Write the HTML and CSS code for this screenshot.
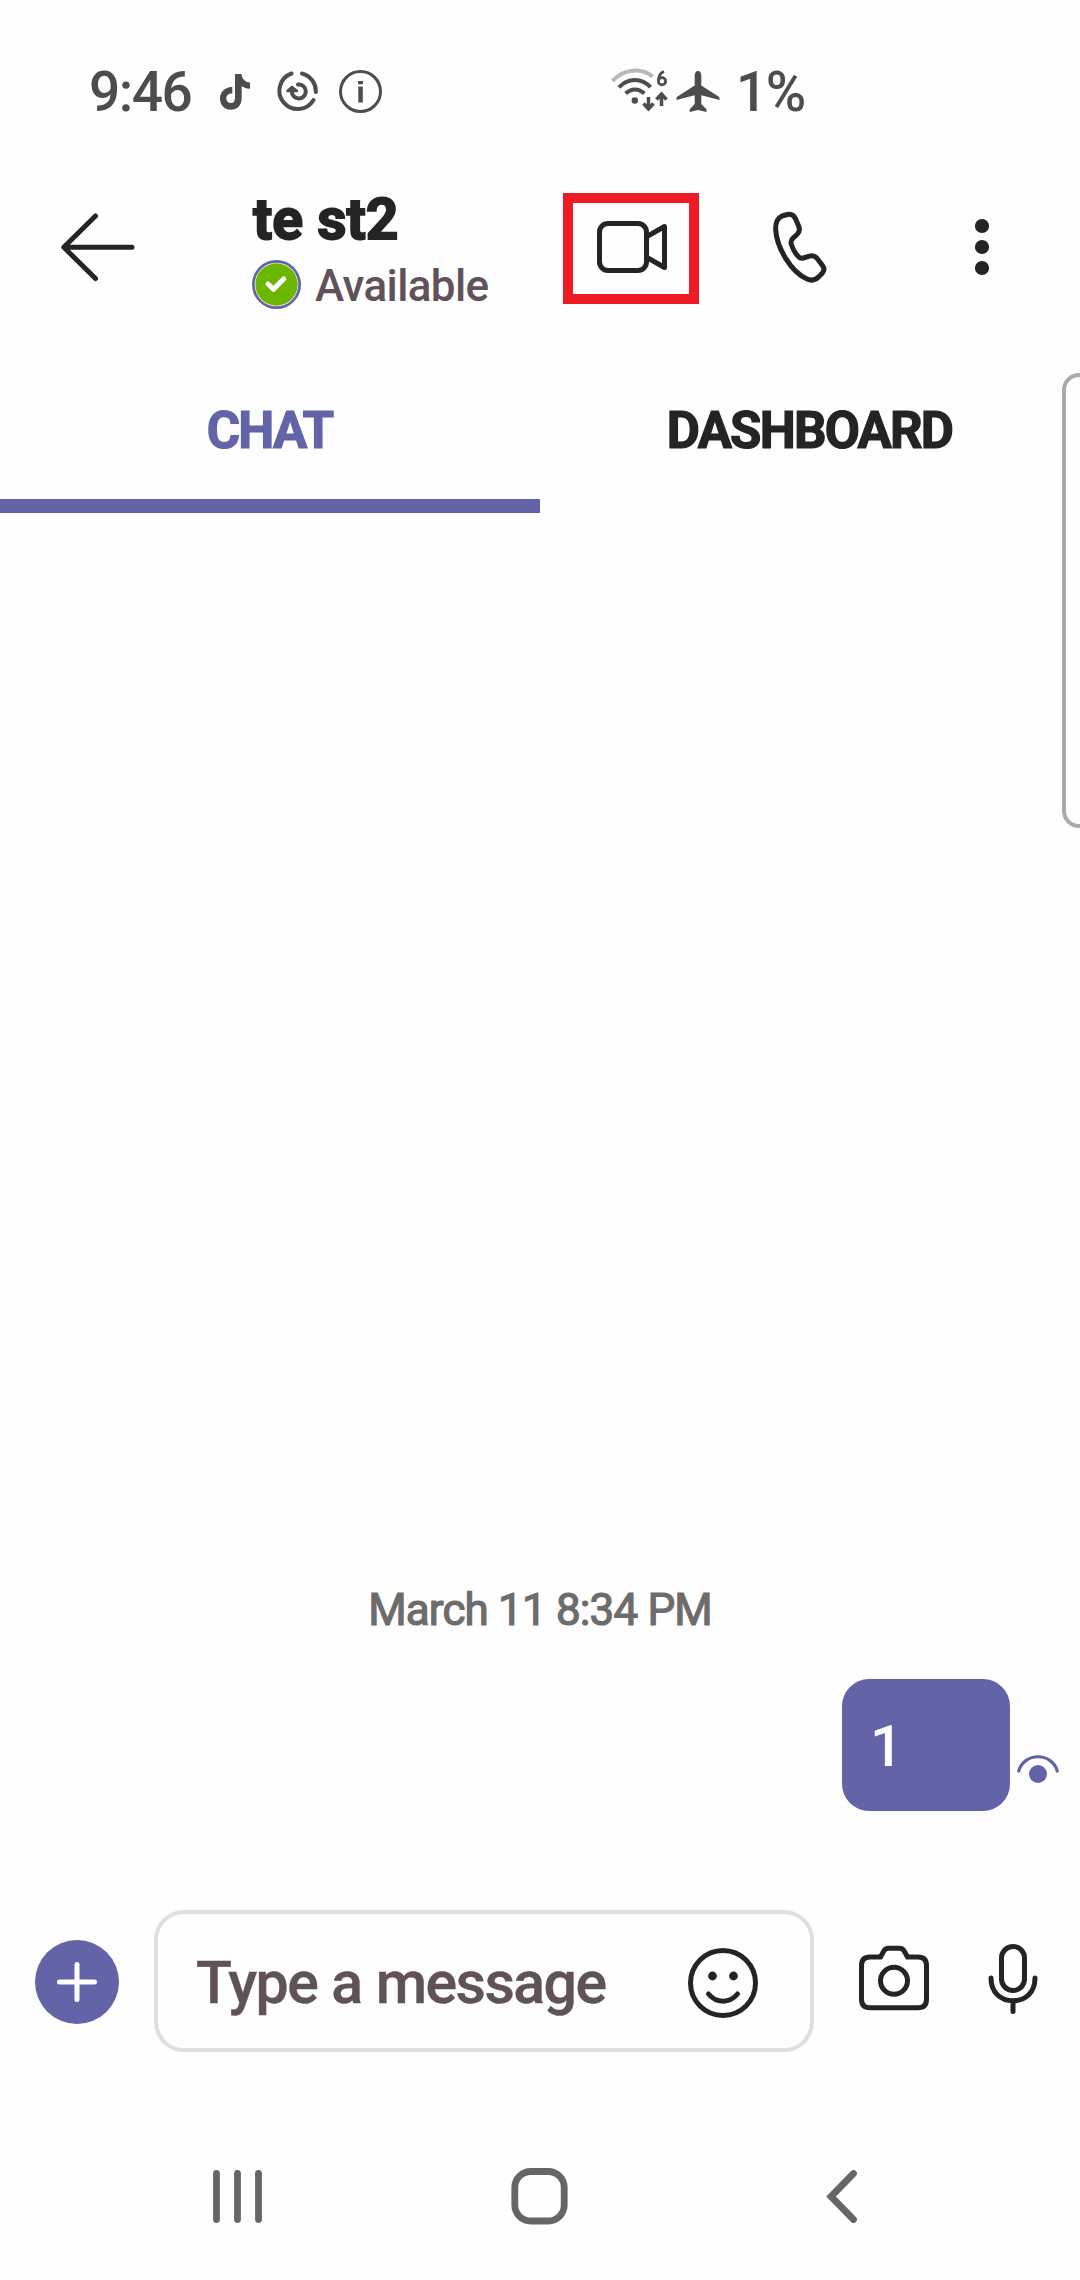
FILE: index.html
```html
<!DOCTYPE html>
<html lang="en">
<head>
<meta charset="utf-8">
<title>te st2 - Chat</title>
<link rel="stylesheet" href="styles.css">
</head>
<body>
<div class="phone">
  <div class="status">
    <span class="time">9:46</span>
    <svg class="tiktok" viewBox="220 74 30 36" width="30" height="36"><path fill="#4d4d4d" d="M235 74h6.5c.3 4.8 3.6 8 8.5 8.600v6c-3 .2-6-.8-8.300-2.600V98c0 7.500-4.700 11.800-10.900 11.800S220 105 220 98.500c0-6.700 5.500-11.800 12.300-11.400v6.500c-3.300-.6-6 1.700-6 4.800 0 2.900 2.100 4.700 4.600 4.700 2.700 0 4.100-1.900 4.100-5z"/></svg>
    <svg class="activity" viewBox="276 70 43 43" width="43" height="43" fill="none" stroke="#4d4d4d" stroke-width="4" stroke-linecap="round"><path d="M291.500 73.500A18.300 18.300 0 1 0 313.500 100M302 73.500A18.300 18.300 0 0 1 315.800 92"/><path d="M298 84.500A7 7 0 1 1 291.800 91.500"/><path d="M287.500 91l4.500-4 5 4z" fill="#4d4d4d" stroke-width="2.500" stroke-linejoin="round"/></svg>
    <svg class="info" viewBox="339 70 43 43" width="43" height="43"><circle cx="360.500" cy="91.500" r="20" fill="none" stroke="#4d4d4d" stroke-width="3"/><path fill="#4d4d4d" d="M358.300 86.500h4.500v16h-4.500zM358 81h5v3.300h-5z"/></svg>
    <svg class="wifi" viewBox="610 68 60 44" width="60" height="44" fill="none" stroke="#4d4d4d" stroke-width="4"><path stroke="#b8b8b8" d="M612.500 81C623 69 641 67 652.700 76.500"/><path d="M619 87.300C628 77.500 642 77.500 650.500 87.300M625.700 93.500C631 88 639 88 644.300 93.500"/><circle cx="634.800" cy="100.500" r="3.200" fill="#4d4d4d" stroke="none"/><path stroke-width="3.500" d="M648.500 97v13M643.500 103.500l5 5.500 5-5.500M661.500 106V93.500M656.500 99.500l5-5.500 5 5.500"/><circle cx="662" cy="81.200" r="3.600" stroke-width="2.800"/><path stroke-width="2.800" d="M664 71.500c-4 1.500-5.600 4.500-5.600 9.500"/></svg>
    <svg class="plane" viewBox="676 70 44 42" width="44" height="42"><path fill="#4d4d4d" d="M698 70c-2 0-3.300 2-3.300 4.500V84.500L677.500 95.500Q676.300 96.300 676.300 99l18.400-4.800v8.800L690 108q-.5.700-.3 3l8.300-2 8.500 2q.3-2.300-.3-3L701.300 103V94.200l18.400 4.800q0-2.700-1.200-3.500L701.300 84.500V74.500C701.300 72 700 70 698 70z"/></svg>
    <span class="battery">1%</span>
  </div>

  <header class="header">
    <svg class="back" viewBox="60 210 76 74" width="76" height="74" fill="none" stroke="#242424" stroke-width="5" stroke-linecap="round" stroke-linejoin="round"><path d="M95.500 216L63.800 247.300 95.500 278.500M64 247.300H132"/></svg>
    <div class="contact">
      <h1 class="name">te st2</h1>
      <div class="presence">
        <svg viewBox="252 260 49 49" width="49" height="49"><circle cx="276.500" cy="284.500" r="24.500" fill="#6264a7"/><circle cx="276.500" cy="284.500" r="21.800" fill="#fefefe"/><circle cx="276.500" cy="284.500" r="21.200" fill="#6bb700"/><path d="M268 284l5.500 5.300 10.200-10.300" fill="none" stroke="#fff" stroke-width="5" stroke-linecap="round" stroke-linejoin="round"/></svg>
        <span class="available">Available</span>
      </div>
    </div>
    <div class="video"><svg viewBox="596 219 72 56" width="72" height="56" fill="none" stroke="#242424" stroke-width="5" stroke-linejoin="round"><rect x="599.500" y="223.500" width="47" height="47" rx="8.500"/><path d="M647 236.500l17.500-10v41L647 257.500"/></svg></div>
    <svg class="phone-icon" viewBox="771 210 58 74" width="58" height="74" fill="none" stroke="#242424" stroke-width="5" stroke-linejoin="round"><path d="M782 216l5.500-1.500c4-.8 6.500.8 8 4.300l3.300 7.700c1.300 3.300.7 5.500-1.800 8l-4.500 4.200c-1.700 1.700-1.800 3-1.300 5.200 1.500 5 4 9.500 7.200 12.700 1.500 1.700 3 2 5 1.400l6-1.900c3.300-1 5.800-.2 7.800 2.400l5.300 7c2 2.700 1.800 5.500-.5 8l-3 3.100c-3.200 3.400-7.700 4.300-12 2.400-16-7-30-31-31.300-49-.4-7 2-12 6.300-14z"/></svg>
    <svg class="more" viewBox="974 217 16 60" width="16" height="60" fill="#242424"><circle cx="982" cy="226" r="7.100"/><circle cx="982" cy="247" r="7.100"/><circle cx="982" cy="268" r="7.100"/></svg>
  </header>

  <nav class="tabs">
    <div class="tab active"><span>CHAT</span></div>
    <div class="tab"><span>DASHBOARD</span></div>
    <div class="edge-handle"></div>
  </nav>

  <main class="messages">
    <div class="date">March 11 8:34 PM</div>
    <div class="sent">
      <div class="bubble">1</div>
      <svg class="seen" viewBox="1016 1753 44 32" width="44" height="32"><path d="M1018.700 1771C1024 1752 1052 1752 1057.300 1771" fill="none" stroke="#6264a7" stroke-width="3.200" stroke-linecap="round"/><circle cx="1038" cy="1774" r="9" fill="#6264a7"/></svg>
    </div>
  </main>

  <div class="compose">
    <svg class="plus" viewBox="35 1940 84 84" width="84" height="84"><circle cx="77" cy="1982" r="42" fill="#6264a7"/><path d="M77 1964.500v35M59.500 1982h35" stroke="#fff" stroke-width="5" stroke-linecap="round"/></svg>
    <div class="input">
      <span class="placeholder">Type a message</span>
      <svg class="smile" viewBox="687 1947 72 72" width="72" height="72" fill="none" stroke="#242424" stroke-width="5"><circle cx="723" cy="1983" r="32.500"/><circle cx="712.500" cy="1976" r="4.400" fill="#242424" stroke="none"/><circle cx="733.500" cy="1976" r="4.400" fill="#242424" stroke="none"/><path stroke-linecap="round" d="M708.500 1994c8 9.500 21 9.500 29 0"/></svg>
    </div>
    <svg class="camera" viewBox="857 1944 74 68" width="74" height="68" fill="none" stroke="#242424" stroke-width="5"><path d="M870 1957h10.500l3.200-5.800q1.700-2.900 4.700-2.900h11.200q3 0 4.700 2.900l3.200 5.800H918q8.500 0 8.500 8.500v33.700q0 8.500-8.500 8.500H870q-8.500 0-8.500-8.500v-33.700q0-8.500 8.500-8.500z"/><circle cx="894" cy="1980.700" r="13.500"/></svg>
    <svg class="mic" viewBox="986 1942 54 74" width="54" height="74" fill="none" stroke="#242424" stroke-width="5" stroke-linecap="round"><rect x="1001.500" y="1946.500" width="23" height="44" rx="11.500"/><path d="M991 1978c0 14.500 9.500 22.800 22 22.800s22-8.300 22-22.800M1013 2001v10.500"/></svg>
  </div>

  <div class="navbar">
    <svg viewBox="211 2166 54 60" width="54" height="60" stroke="#666" stroke-width="6.800" stroke-linecap="round"><path d="M216.500 2173.500v46M237.500 2173.500v46M258.500 2173.500v46"/></svg>
    <svg class="home" viewBox="510 2166 60 60" width="60" height="60"><rect x="514.800" y="2171.500" width="49.400" height="49.500" rx="16" fill="none" stroke="#666" stroke-width="6.800"/></svg>
    <svg class="nav-back" viewBox="824 2166 36 60" width="36" height="60" fill="none" stroke="#666" stroke-width="6.800" stroke-linecap="round"><path d="M853.500 2173.500L831 2196.500l22.500 23"/></svg>
  </div>
</div>
</body>
</html>
```
FILE: styles.css
```css
* { box-sizing: border-box; }
body {
  margin: 0;
  background: #fefefe;
  color: #242424;
  font-family: Roboto, "Liberation Sans", sans-serif;
}
svg { display: block; flex: none; }
span, .name, .date, .bubble { white-space: nowrap; }
.phone {
  width: 1080px;
  height: 2280px;
  display: flex;
  flex-direction: column;
  overflow: hidden;
}

/* Status bar */
.status {
  height: 183px;
  display: flex;
  align-items: center;
  color: #4d4d4d;
  font-size: 55px;
  font-weight: 500;
}
.time { width: 131px; margin-left: 89px; letter-spacing: -1.5px; }
.activity { margin-left: 26px; }
.info { margin-left: 20px; }
.wifi { margin-left: 228px; margin-top: -3px; }
.plane { margin-left: 6px; }
.battery { margin-left: 16px; letter-spacing: -1.5px; }

/* Header */
.header {
  height: 178px;
  padding: 8px 0 0 60px;
  display: flex;
  align-items: flex-start;
}
.back { margin-top: 19px; }
.contact { width: 311px; margin-left: 116px; }
.name {
  height: 57px;
  margin: 0;
  padding-left: 1px;
  font-size: 57px;
  line-height: 57px;
  font-weight: 700;
  -webkit-text-stroke: 1.8px #242424;
}
.presence {
  margin-top: 12px;
  height: 49px;
  display: flex;
  align-items: center;
  gap: 14px;
  color: #61525a;
  font-size: 44px;
  font-weight: 500;
}
.available { letter-spacing: -0.6px; padding-top: 2px; }
.video {
  width: 136px;
  height: 111px;
  margin-top: 2px;
  border: 10px solid #ed1c24;
  padding: 16px 0 0 23px;
}
.phone-icon { margin: 19px 0 0 72px; }
.more { margin: 26px 0 0 145px; }

/* Tabs */
.tabs {
  height: 152px;
  display: grid;
  grid-template-columns: 1fr 1fr;
  position: relative;
}
.tab {
  display: flex;
  align-items: center;
  justify-content: center;
  padding-right: 1px;
  border-bottom: 14px solid transparent;
  font-size: 51px;
  font-weight: 700;
  letter-spacing: -1.8px;
  -webkit-text-stroke: 1.2px currentColor;
}
.tab.active { color: #6264a7; border-color: #6264a7; }
.edge-handle {
  position: absolute;
  top: 12px;
  right: 0;
  width: 18px;
  height: 455px;
  border: 4px solid #aaa;
  border-right: 0;
  border-radius: 17px 0 0 17px;
}

/* Messages */
.messages {
  flex: 1;
  display: flex;
  flex-direction: column;
  justify-content: flex-end;
}
.date {
  text-align: center;
  font-size: 44px;
  line-height: 50px;
  color: #6e6b6b;
  letter-spacing: -0.85px;
  -webkit-text-stroke: 1.2px #6e6b6b;
}
.sent {
  display: flex;
  justify-content: flex-end;
  align-items: flex-end;
  gap: 6px;
  padding: 44px 20px 99px 0;
}
.bubble {
  width: 168px;
  height: 132px;
  padding-left: 28px;
  border-radius: 27px;
  background: #6264a7;
  color: #fff;
  font-size: 58px;
  font-weight: 500;
  line-height: 134px;
}
.seen { margin-bottom: 26px; }

/* Compose row */
.compose {
  height: 142px;
  display: flex;
  align-items: center;
  padding-left: 35px;
}
.plus { margin-top: 2px; }
.input {
  width: 660px;
  height: 142px;
  margin-left: 35px;
  padding: 3px 51px 0 38px;
  border: 4px solid #dfdfde;
  border-radius: 30px;
  display: flex;
  align-items: center;
  justify-content: space-between;
}
.smile { margin-top: 1px; }
.placeholder {
  color: #61525a;
  font-size: 59px;
  font-weight: 500;
  letter-spacing: -1.55px;
  word-spacing: 1px;
  -webkit-text-stroke: 0.4px #61525a;
}
.camera { margin: -6px 0 0 43px; }
.mic { margin: -4px 0 0 55px; }

/* System navigation */
.navbar {
  height: 228px;
  padding: 114px 220px 0 211px;
  display: flex;
}
.home { margin-left: 245px; }
.nav-back { margin-left: 254px; }
```
